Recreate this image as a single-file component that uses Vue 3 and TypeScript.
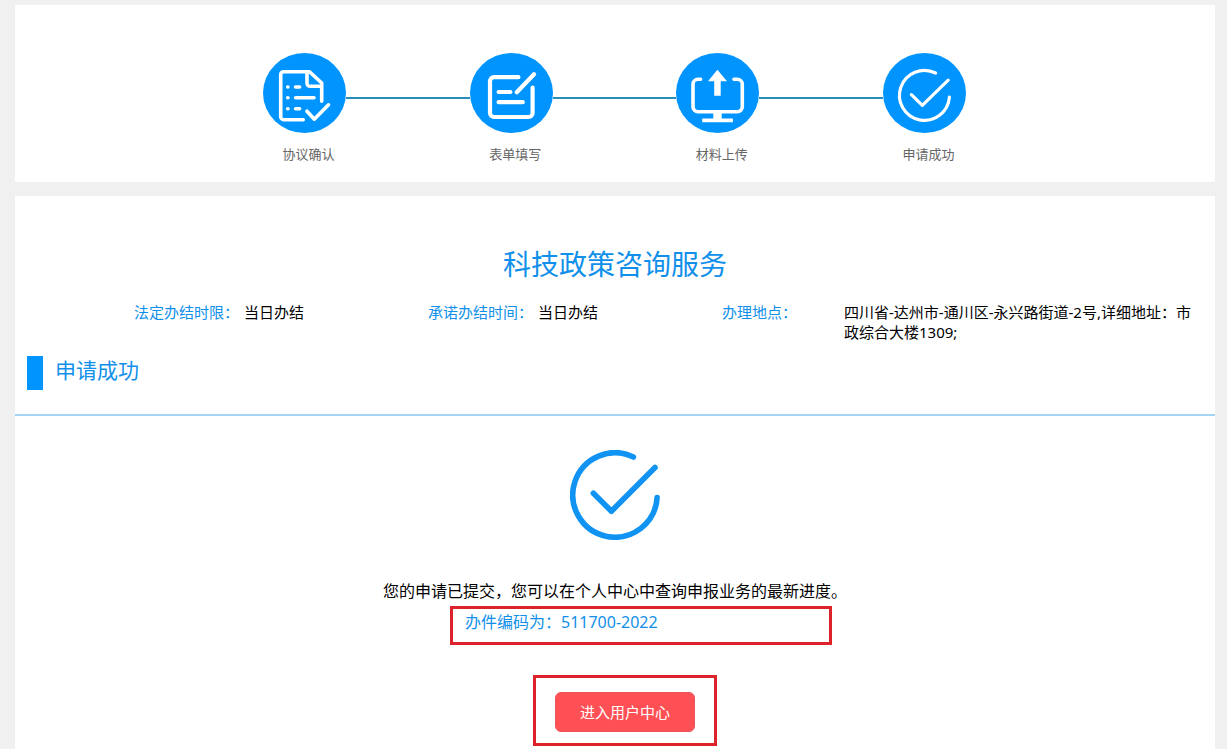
<script setup lang="ts">
type StepIcon = 'agreement' | 'form' | 'upload' | 'done'

interface Step {
  icon: StepIcon
  label: string
}

interface Info {
  label: string
  value: string
}

const steps: Step[] = [
  { icon: 'agreement', label: '协议确认' },
  { icon: 'form', label: '表单填写' },
  { icon: 'upload', label: '材料上传' },
  { icon: 'done', label: '申请成功' },
]

const infos: Info[] = [
  { label: '法定办结时限：', value: '当日办结' },
  { label: '承诺办结时间：', value: '当日办结' },
  { label: '办理地点：', value: '四川省-达州市-通川区-永兴路街道-2号,详细地址：市政综合大楼1309;' },
]
</script>

<template>
  <div class="page">
    <section class="card progress">
      <ol class="steps">
        <template v-for="(step, index) in steps" :key="step.icon">
          <li v-if="index > 0" class="connector" aria-hidden="true"></li>
          <li class="step">
            <svg class="step-icon" viewBox="0 0 83 80" aria-hidden="true">
              <ellipse cx="41.5" cy="40" rx="41.5" ry="40" fill="#0094ff" />
              <g
                fill="none"
                stroke="#fff"
                stroke-width="3.6"
                stroke-linecap="round"
                stroke-linejoin="round"
              >
                <template v-if="step.icon === 'agreement'">
                  <path d="M40.3 66.7H20.7a3 3 0 0 1-3-3V21.7a3 3 0 0 1 3-3H46.5L58.7 30V48.2" />
                  <path d="M44 19.5V30.3a3 3 0 0 0 3 3H58" />
                  <path d="M24.7 34h.2M32.6 34h4M24.7 44.8h.2M32.6 44.8h18.4M24.7 55.7h.2M32.6 55.7h4" />
                  <path d="M44 58.2l7.3 8 14.2-14.4" />
                </template>
                <g v-else-if="step.icon === 'form'" stroke-width="4.2">
                  <path d="M48.4 24.2H24a4 4 0 0 0-4 4V60a4 4 0 0 0 4 4H58.6a4 4 0 0 0 4-4V34.7" />
                  <path d="M64 21.2L46.8 39.3M28.6 39H40.4M28.6 49.2H52.8" />
                </g>
                <template v-else-if="step.icon === 'upload'">
                  <path d="M24.6 26.3H22a5 5 0 0 0-5 5V53.7a5 5 0 0 0 5 5H61.3a5 5 0 0 0 5-5V31.3a5 5 0 0 0-5-5H58" />
                  <path d="M41.4 16.8L51 28.2H44.7V42.8H38.2V28.2H32z" fill="#fff" stroke="none" />
                  <path d="M37.3 59h8.4v6.4h11.2v3.8H26.2v-3.8h11.1z" fill="#fff" stroke="none" />
                </template>
                <g v-else stroke-width="3.2">
                  <path d="M52.6 20A25 25 0 1 0 66.4 44.2" />
                  <path d="M28.4 41.7l10.9 10.7L65.2 27.2" />
                </g>
              </g>
            </svg>
            <span class="step-label">{{ step.label }}</span>
          </li>
        </template>
      </ol>
    </section>

    <main class="card detail">
      <h1 class="title">科技政策咨询服务</h1>
      <dl class="infos">
        <div v-for="info in infos" :key="info.label" class="info">
          <dt>{{ info.label }}</dt>
          <dd>{{ info.value }}</dd>
        </div>
      </dl>
      <h2 class="section-title">申请成功</h2>

      <div class="result">
        <svg class="result-icon" viewBox="0 0 90 90" aria-hidden="true">
          <g
            fill="none"
            stroke="#1093f3"
            stroke-width="5.6"
            stroke-linecap="round"
            stroke-linejoin="round"
          >
            <path d="M63.4 7A42.2 42.2 0 1 0 87.1 47.6" />
            <path d="M23.4 43.2l18 18L85 17.5" />
          </g>
        </svg>
        <p class="message">您的申请已提交，您可以在个人中心中查询申报业务的最新进度。</p>
        <p class="code">办件编码为：511700-2022</p>
        <div class="action">
          <button type="button" class="enter">进入用户中心</button>
        </div>
      </div>
    </main>
  </div>
</template>

<style>
body {
  margin: 0;
  background: #f0f0f0;
}
</style>

<style scoped>
.page {
  box-sizing: border-box;
  min-height: 100vh;
  padding: 5px 12px 0 15px;
  display: flex;
  flex-direction: column;
  gap: 14px;
  background: #f0f0f0;
  color: #000;
  font-family: "Noto Sans", "Noto Sans CJK SC", sans-serif;
  font-size: 15px;
  line-height: 20px;
}

.card {
  background: #fff;
}

.progress {
  padding: 48px 25px 18px 24px;
}

.steps {
  display: flex;
  max-width: 703px;
  margin: 0 auto;
  padding: 0;
  list-style: none;
}

.step {
  flex: none;
  width: 83px;
}

.step-icon {
  display: block;
  width: 83px;
  height: 80px;
}

.step-label {
  display: block;
  margin-top: 11px;
  padding-left: 8px;
  color: #666;
  font-size: 13px;
  text-align: center;
}

.connector {
  flex: 1;
  height: 2px;
  margin-top: 44px;
  background: #2a8fb8;
}

.detail {
  flex: 1;
  padding-top: 48px;
}

.title {
  margin: 0 0 18px;
  color: #1090ea;
  font-size: 28px;
  font-weight: 400;
  line-height: 40px;
  text-align: center;
}

.infos {
  display: grid;
  grid-template-columns: 294px 294px 1fr;
  margin: 0;
  padding: 0 12px 0 119px;
}

.info {
  display: flex;
}

.info dt {
  flex: none;
  width: 110px;
  color: #1090ea;
}

.info:last-child dt {
  width: 122px;
}

.info dd {
  margin: 0;
}

.section-title {
  margin: 14px 0 0;
  padding: 0 12px 24px;
  display: flex;
  gap: 12px;
  border-bottom: 2px solid #a5d3f2;
  color: #1090ea;
  font-size: 21px;
  font-weight: 400;
  line-height: 28px;
}

.section-title::before {
  content: "";
  width: 16px;
  height: 34px;
  background: #0094ff;
}

.result {
  display: flex;
  flex-direction: column;
  align-items: center;
  padding: 34px 0 3px;
}

.result-icon {
  width: 90px;
  height: 90px;
}

.message {
  margin: 40px 0 4px;
  font-size: 16px;
  line-height: 22px;
}

.code {
  box-sizing: border-box;
  width: 382px;
  margin: 0 0 30px 52px;
  padding: 0 12px 7px;
  border: 3px solid #dc2329;
  color: #1090ea;
  font-size: 16px;
  line-height: 26px;
}

.action {
  margin-left: 20px;
  padding: 14px 19px 11px;
  border: 3px solid #dc2329;
}

.enter {
  display: block;
  width: 140px;
  height: 40px;
  padding: 0;
  border: 1px solid #e8565a;
  border-radius: 6px;
  background: #ff5155;
  color: #fff;
  font: inherit;
  cursor: pointer;
}
</style>
